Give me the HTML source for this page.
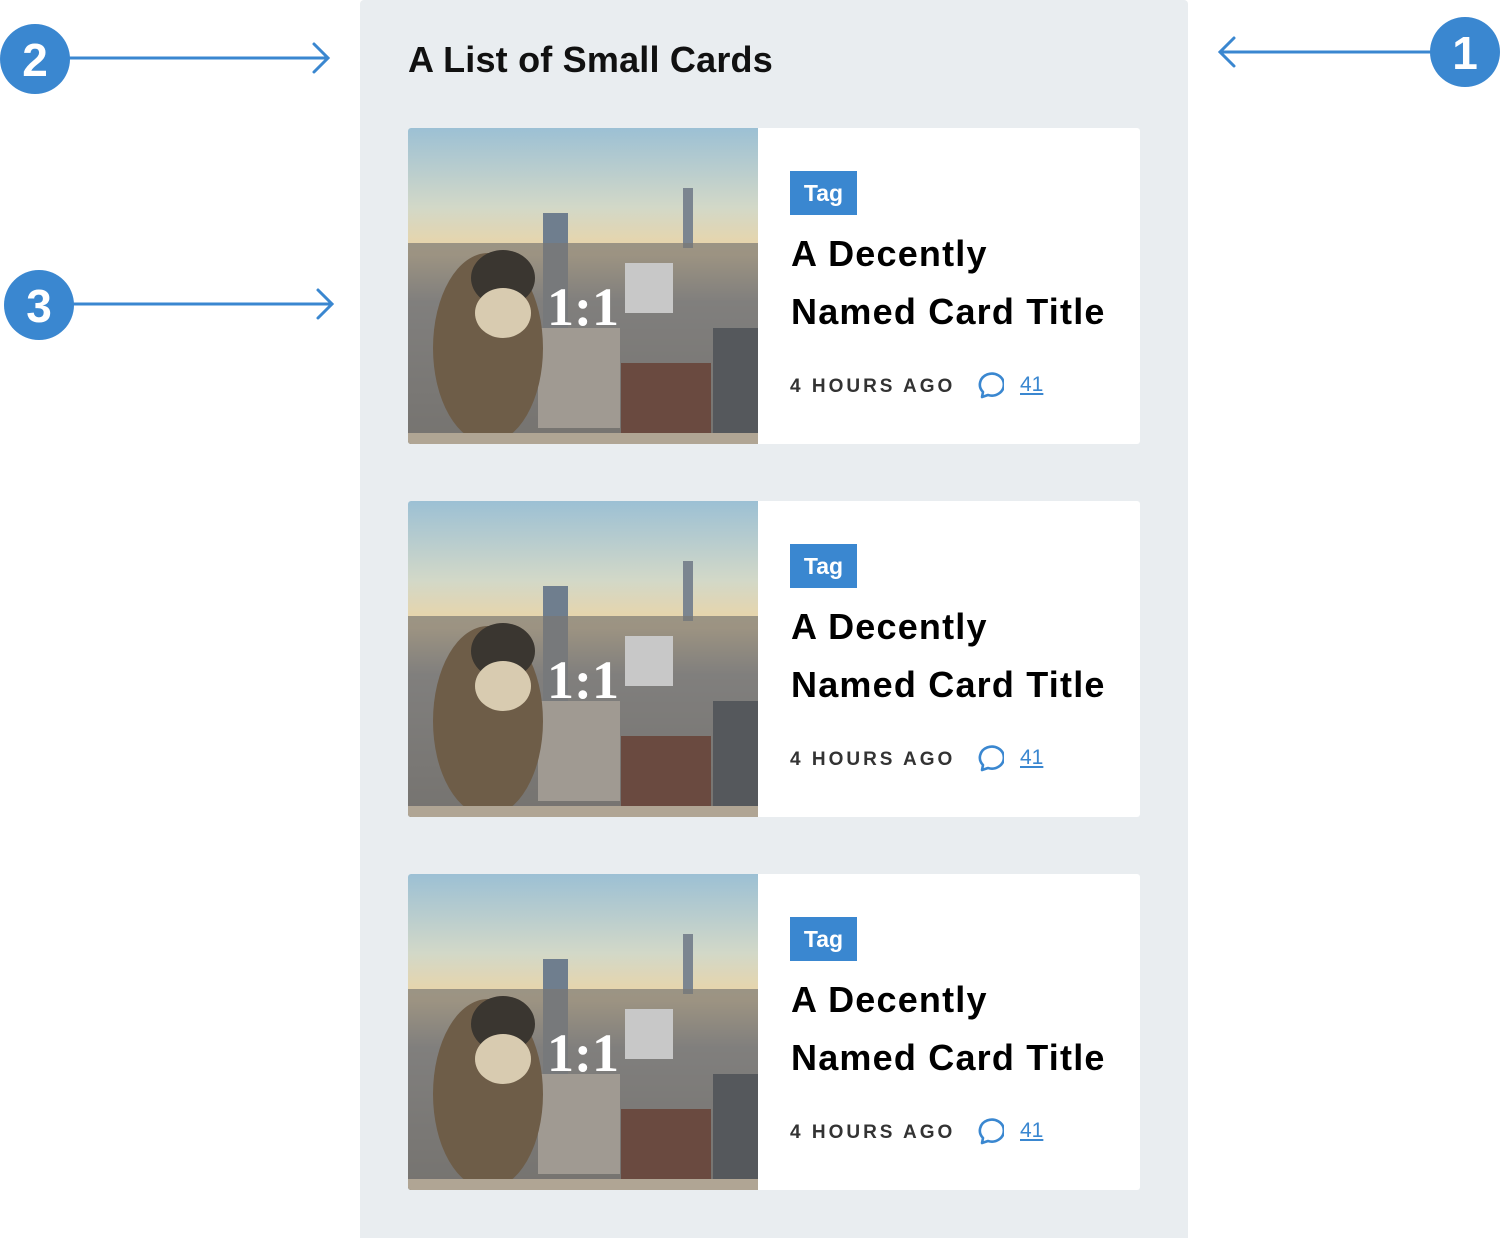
<!DOCTYPE html>
<html><head><meta charset="utf-8"><style>
body{margin:0;width:1500px;height:1238px;background:#fff;position:relative;overflow:hidden;font-family:"Liberation Sans",sans-serif}
.panel{position:absolute;left:360px;top:0;width:828px;height:1238px;background:#e9edf0;border-radius:4px 4px 0 0}
h1{position:absolute;left:408px;top:39px;margin:0;font-size:36px;font-weight:bold;color:#111;letter-spacing:0.2px}
.card{position:absolute;left:408px;width:732px;height:316px;background:#fff;border-radius:3px;overflow:hidden}
.img{position:absolute;left:0;top:0;width:350px;height:316px}
.tag{position:absolute;left:382px;top:43px;width:67px;height:44px;background:#3a87d0;color:#fff;font-weight:bold;font-size:23px;line-height:44px;text-align:center}
.t{position:absolute;left:383px;top:97px;font-size:36px;font-weight:bold;line-height:58px;color:#000;letter-spacing:1.2px}
.meta{position:absolute;left:382px;top:248px;font-size:19px;font-weight:bold;letter-spacing:3px;color:#333}
.cm{position:absolute;left:566px;top:243px}
.num{position:absolute;left:612px;top:245px;font-size:21px;color:#3a87d0;text-decoration:underline}
.ratio{position:absolute;left:0;width:350px;top:148px;text-align:center;color:#fff;font:bold 54px "Liberation Serif",serif}
</style></head><body>
<svg width="1500" height="1238" style="position:absolute;left:0;top:0">
<defs><linearGradient id="s" x1="0" y1="0" x2="0" y2="1"><stop offset="0" stop-color="#9cc0d4"/><stop offset=".25" stop-color="#d2d8c8"/><stop offset=".4" stop-color="#ecd4a4"/><stop offset=".55" stop-color="#8e9094"/><stop offset="1" stop-color="#6b6a68"/></linearGradient></defs>
<g fill="#3a87d0" stroke="#3a87d0">
<circle cx="35" cy="59" r="35" stroke="none"/>
<line x1="65" y1="58" x2="328" y2="58" stroke-width="3"/>
<polyline points="314,44 328,58 314,72" fill="none" stroke-width="3" stroke-linecap="round"/>
<circle cx="39" cy="305" r="35" stroke="none"/>
<line x1="70" y1="304" x2="332" y2="304" stroke-width="3"/>
<polyline points="318,290 332,304 318,318" fill="none" stroke-width="3" stroke-linecap="round"/>
<circle cx="1465" cy="52" r="35" stroke="none"/>
<line x1="1220" y1="52" x2="1432" y2="52" stroke-width="3"/>
<polyline points="1234,38 1220,52 1234,66" fill="none" stroke-width="3" stroke-linecap="round"/>
</g>
<g fill="#fff" font-family="Liberation Sans" font-weight="bold" font-size="46" text-anchor="middle">
<text x="35" y="76">2</text><text x="39" y="322">3</text><text x="1465" y="69">1</text>
</g>
</svg>
<div class="panel"></div>
<h1>A List of Small Cards</h1>

<div class="card" style="top:128px">
<svg class="img" viewBox="0 0 350 316"><rect width="350" height="316" fill="url(#s)"/>
<rect x="275" y="60" width="10" height="60" fill="#7b8590"/><rect x="135" y="85" width="25" height="120" fill="#6f7e8e"/><rect x="0" y="115" width="350" height="201" fill="#7a7774" opacity=".7"/>
<rect x="217" y="135" width="48" height="50" fill="#c8c8c8"/><rect x="130" y="200" width="82" height="100" fill="#a09a92"/><rect x="213" y="235" width="90" height="70" fill="#6a4a40"/><rect x="305" y="200" width="45" height="116" fill="#55585c"/>
<ellipse cx="80" cy="220" rx="55" ry="95" fill="#6e5d48"/><ellipse cx="95" cy="150" rx="32" ry="28" fill="#3a3630"/><ellipse cx="95" cy="185" rx="28" ry="25" fill="#d8cbb0"/>
<rect x="0" y="305" width="350" height="11" fill="#b0a594"/></svg>
<div class="ratio">1:1</div>
<div class="tag">Tag</div><div class="t">A Decently<br>Named Card Title</div>
<div class="meta">4 HOURS AGO</div>
<svg class="cm" width="30" height="30" viewBox="0 0 30 30"><path d="M8 26 L9 21 A12 11 0 1 1 14 24 Z" fill="none" stroke="#3a87d0" stroke-width="2.6" stroke-linejoin="round"/></svg>
<div class="num">41</div></div>

<div class="card" style="top:501px">
<svg class="img" viewBox="0 0 350 316"><rect width="350" height="316" fill="url(#s)"/>
<rect x="275" y="60" width="10" height="60" fill="#7b8590"/><rect x="135" y="85" width="25" height="120" fill="#6f7e8e"/><rect x="0" y="115" width="350" height="201" fill="#7a7774" opacity=".7"/>
<rect x="217" y="135" width="48" height="50" fill="#c8c8c8"/><rect x="130" y="200" width="82" height="100" fill="#a09a92"/><rect x="213" y="235" width="90" height="70" fill="#6a4a40"/><rect x="305" y="200" width="45" height="116" fill="#55585c"/>
<ellipse cx="80" cy="220" rx="55" ry="95" fill="#6e5d48"/><ellipse cx="95" cy="150" rx="32" ry="28" fill="#3a3630"/><ellipse cx="95" cy="185" rx="28" ry="25" fill="#d8cbb0"/>
<rect x="0" y="305" width="350" height="11" fill="#b0a594"/></svg>
<div class="ratio">1:1</div>
<div class="tag">Tag</div><div class="t">A Decently<br>Named Card Title</div>
<div class="meta">4 HOURS AGO</div>
<svg class="cm" width="30" height="30" viewBox="0 0 30 30"><path d="M8 26 L9 21 A12 11 0 1 1 14 24 Z" fill="none" stroke="#3a87d0" stroke-width="2.6" stroke-linejoin="round"/></svg>
<div class="num">41</div></div>

<div class="card" style="top:874px">
<svg class="img" viewBox="0 0 350 316"><rect width="350" height="316" fill="url(#s)"/>
<rect x="275" y="60" width="10" height="60" fill="#7b8590"/><rect x="135" y="85" width="25" height="120" fill="#6f7e8e"/><rect x="0" y="115" width="350" height="201" fill="#7a7774" opacity=".7"/>
<rect x="217" y="135" width="48" height="50" fill="#c8c8c8"/><rect x="130" y="200" width="82" height="100" fill="#a09a92"/><rect x="213" y="235" width="90" height="70" fill="#6a4a40"/><rect x="305" y="200" width="45" height="116" fill="#55585c"/>
<ellipse cx="80" cy="220" rx="55" ry="95" fill="#6e5d48"/><ellipse cx="95" cy="150" rx="32" ry="28" fill="#3a3630"/><ellipse cx="95" cy="185" rx="28" ry="25" fill="#d8cbb0"/>
<rect x="0" y="305" width="350" height="11" fill="#b0a594"/></svg>
<div class="ratio">1:1</div>
<div class="tag">Tag</div><div class="t">A Decently<br>Named Card Title</div>
<div class="meta">4 HOURS AGO</div>
<svg class="cm" width="30" height="30" viewBox="0 0 30 30"><path d="M8 26 L9 21 A12 11 0 1 1 14 24 Z" fill="none" stroke="#3a87d0" stroke-width="2.6" stroke-linejoin="round"/></svg>
<div class="num">41</div></div>
</body></html>
